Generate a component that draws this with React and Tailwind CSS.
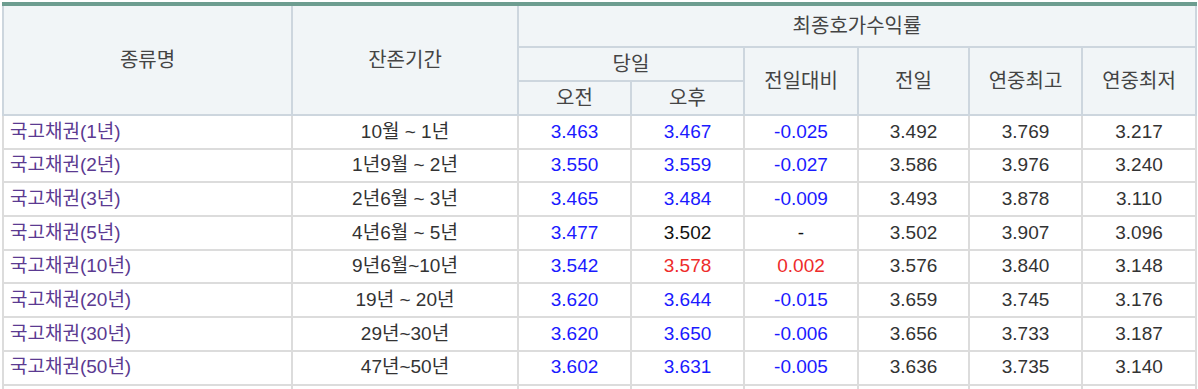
import React from 'react';

const rows = [
  { name: '국고채권(1년)', term: '10월 ~ 1년', am: '3.463', pm: '3.467', diff: '-0.025', prev: '3.492', hi: '3.769', lo: '3.217', tone: 'down' },
  { name: '국고채권(2년)', term: '1년9월 ~ 2년', am: '3.550', pm: '3.559', diff: '-0.027', prev: '3.586', hi: '3.976', lo: '3.240', tone: 'down' },
  { name: '국고채권(3년)', term: '2년6월 ~ 3년', am: '3.465', pm: '3.484', diff: '-0.009', prev: '3.493', hi: '3.878', lo: '3.110', tone: 'down' },
  { name: '국고채권(5년)', term: '4년6월 ~ 5년', am: '3.477', pm: '3.502', diff: '-', prev: '3.502', hi: '3.907', lo: '3.096', tone: 'flat' },
  { name: '국고채권(10년)', term: '9년6월~10년', am: '3.542', pm: '3.578', diff: '0.002', prev: '3.576', hi: '3.840', lo: '3.148', tone: 'up' },
  { name: '국고채권(20년)', term: '19년 ~ 20년', am: '3.620', pm: '3.644', diff: '-0.015', prev: '3.659', hi: '3.745', lo: '3.176', tone: 'down' },
  { name: '국고채권(30년)', term: '29년~30년', am: '3.620', pm: '3.650', diff: '-0.006', prev: '3.656', hi: '3.733', lo: '3.187', tone: 'down' },
  { name: '국고채권(50년)', term: '47년~50년', am: '3.602', pm: '3.631', diff: '-0.005', prev: '3.636', hi: '3.735', lo: '3.140', tone: 'down' },
];

const toneClass = {
  down: 'text-[#1a1aff]',
  up: 'text-[#ee2b2b]',
  flat: 'text-[#111]',
};

// header cells: slightly larger hangul than the body
const th = 'border-2 border-[#cdd6de] bg-[#f1f5f7] font-normal text-[20px] text-[#444] text-center';
const td = 'border-2 border-[#dcdcdc] text-center h-[33.7px] py-0';

const App = () => {
  return (
    <div className="pt-[2px] pl-[2px] bg-white" style={{ fontFamily: '"Liberation Sans", "Noto Sans CJK KR", sans-serif' }}>
      <table className="table-fixed border-collapse w-[1193px] text-[19px] text-[#333] border-t-4 border-t-[#6d9d90]">
        <colgroup>
          <col className="w-[289px]" />
          <col className="w-[226px]" />
          <col className="w-[113px]" />
          <col className="w-[113px]" />
          <col className="w-[114px]" />
          <col className="w-[111px]" />
          <col className="w-[113px]" />
          <col className="w-[114px]" />
        </colgroup>
        <thead>
          <tr className="h-[43px]">
            <th rowSpan={3} className={`${th} border-t-0`}>종류명</th>
            <th rowSpan={3} className={`${th} border-t-0`}>잔존기간</th>
            <th colSpan={6} className={`${th} border-t-0`}>최종호가수익률</th>
          </tr>
          <tr className="h-[34px]">
            <th colSpan={2} className={th}>당일</th>
            <th rowSpan={2} className={th}>전일대비</th>
            <th rowSpan={2} className={th}>전일</th>
            <th rowSpan={2} className={th}>연중최고</th>
            <th rowSpan={2} className={th}>연중최저</th>
          </tr>
          <tr className="h-[34px]">
            <th className={th}>오전</th>
            <th className={th}>오후</th>
          </tr>
        </thead>
        <tbody>
          {rows.map((r) => (
            <tr key={r.name}>
              <td className={`${td} text-left pl-[6px]`}>
                <a href="#" className="text-[#5b3a91]">{r.name}</a>
              </td>
              <td className={td}>{r.term}</td>
              <td className={`${td} text-[#1a1aff]`}>{r.am}</td>
              <td className={`${td} ${toneClass[r.tone]}`}>{r.pm}</td>
              <td className={`${td} ${toneClass[r.tone]}`}>{r.diff}</td>
              <td className={td}>{r.prev}</td>
              <td className={td}>{r.hi}</td>
              <td className={td}>{r.lo}</td>
            </tr>
          ))}
          <tr>
            <td className={td}>&nbsp;</td>
            <td className={td}></td>
            <td className={td}></td>
            <td className={td}></td>
            <td className={td}></td>
            <td className={td}></td>
            <td className={td}></td>
            <td className={td}></td>
          </tr>
        </tbody>
      </table>
    </div>
  );
};

export default App;
